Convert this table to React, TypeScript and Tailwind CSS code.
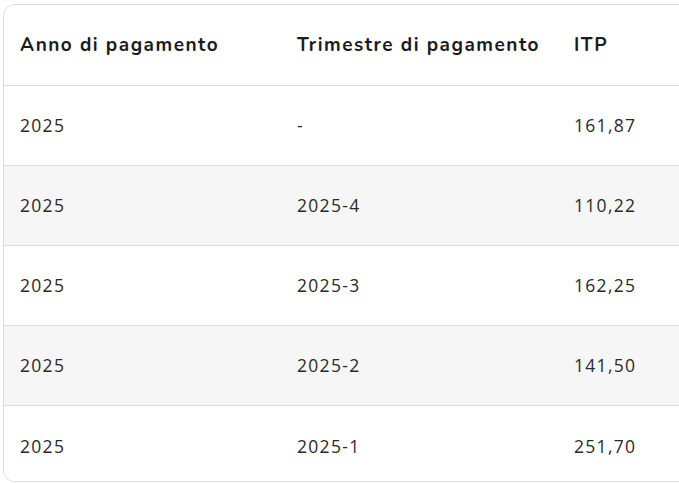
const rows = [
  { anno: "2025", trimestre: "-", itp: "161,87" },
  { anno: "2025", trimestre: "2025-4", itp: "110,22" },
  { anno: "2025", trimestre: "2025-3", itp: "162,25" },
  { anno: "2025", trimestre: "2025-2", itp: "141,50" },
  { anno: "2025", trimestre: "2025-1", itp: "251,70" },
];

export default function App() {
  return (
    <div className="w-[679px] h-[483px] overflow-hidden bg-white pl-[3px] pt-[4px]">
      <div className="w-[900px] h-[478px] rounded-[12px] border border-[#dcdcdc] overflow-hidden">
        <div className="flex h-[81px] items-center border-b border-[#dcdcdc] text-[19px] font-bold text-[#1c1c1c] font-['Nunito','Lato',sans-serif] tracking-[1.5px]">
          <div className="w-[277px] pl-[16px]">Anno di pagamento</div>
          <div className="w-[277px] pl-[16px]">Trimestre di pagamento</div>
          <div className="w-[277px] pl-[16px]">ITP</div>
        </div>
        {rows.map((r, i) => (
          <div
            key={i}
            className={
              "flex h-[80px] items-center text-[17.5px] text-[#2a2a2a] font-['Open_Sans',sans-serif] tracking-[1.3px] " +
              (i % 2 === 1 ? "bg-[#f6f6f6] " : "bg-white ") +
              (i < rows.length - 1 ? "border-b border-[#dcdcdc]" : "")
            }
          >
            <div className="w-[277px] pl-[16px]">{r.anno}</div>
            <div className="w-[277px] pl-[16px]">{r.trimestre}</div>
            <div className="w-[277px] pl-[16px]">{r.itp}</div>
          </div>
        ))}
      </div>
    </div>
  );
}
